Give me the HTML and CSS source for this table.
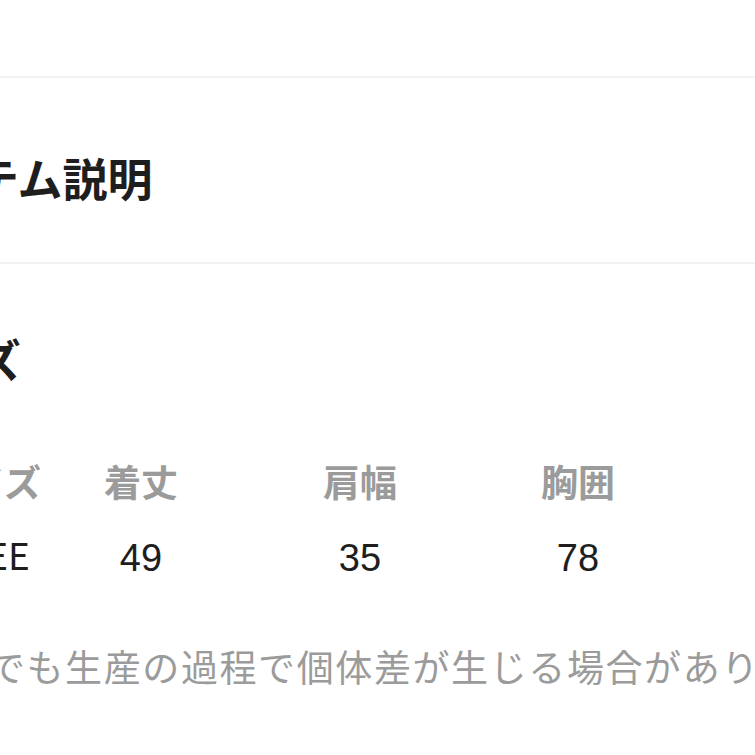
FILE: index.html
```html
<!DOCTYPE html>
<html lang="ja">
<head>
<meta charset="utf-8">
<title>アイテム説明</title>
<link rel="stylesheet" href="styles.css">
</head>
<body>
<div class="page">
  <div class="topbar"></div>
  <section class="sec sec-desc">
    <h2 class="sec-title">アイテム説明</h2>
  </section>
  <section class="sec sec-size">
    <h2 class="sec-title">サイズ</h2>
    <div class="size-table">
      <div class="cell head">サイズ</div>
      <div class="cell head">着丈</div>
      <div class="cell head">肩幅</div>
      <div class="cell head">胸囲</div>
      <div class="cell val label">FREE</div>
      <div class="cell val">49</div>
      <div class="cell val">35</div>
      <div class="cell val">78</div>
    </div>
    <p class="note">同じサイズでも生産の過程で個体差が生じる場合があります。</p>
  </section>
</div>
</body>
</html>
```

FILE: styles.css
```css
html, body {
  margin: 0;
  padding: 0;
  background: #ffffff;
}
body {
  width: 755px;
  height: 755px;
  overflow: hidden;
  font-family: "Noto Sans CJK JP", "Noto Sans", sans-serif;
  color: #1a1a1a;
}
.page {
  margin-left: -113px;
  width: 980px;
}
.topbar {
  height: 76px;
  border-bottom: 2px solid #f1f1f1;
}
.sec-title {
  margin: 0;
  font-size: 45px;
  line-height: 45px;
  font-weight: 700;
  color: #1e1e1e;
  white-space: nowrap;
}
.sec-desc {
  padding: 77px 0 62px;
  border-bottom: 2px solid #f1f1f1;
}
.sec-size {
  padding: 72px 0 71px;
  border-bottom: 1px solid #cccccc;
}
.size-table {
  margin: 82px 0 0 38px;
  display: grid;
  grid-template-columns: 122px 188px 250px 186px;
  row-gap: 39px;
  align-items: start;
}
.cell {
  text-align: center;
  white-space: nowrap;
}
.head {
  font-size: 37px;
  line-height: 37px;
  font-weight: 700;
  color: #9b9b9b;
}
.val {
  font-family: "Liberation Sans", "Noto Sans", sans-serif;
  font-size: 38px;
  line-height: 38px;
  font-weight: 400;
  color: #1e1e1e;
}
.val.label {
  font-family: "Noto Sans CJK JP", "Noto Sans", sans-serif;
  font-size: 37px;
  line-height: 31px;
}
.note {
  margin: 71px 0 0 -91px;
  font-size: 37px;
  line-height: 37px;
  letter-spacing: 1.6px;
  color: #9b9b9b;
  white-space: nowrap;
}
```
